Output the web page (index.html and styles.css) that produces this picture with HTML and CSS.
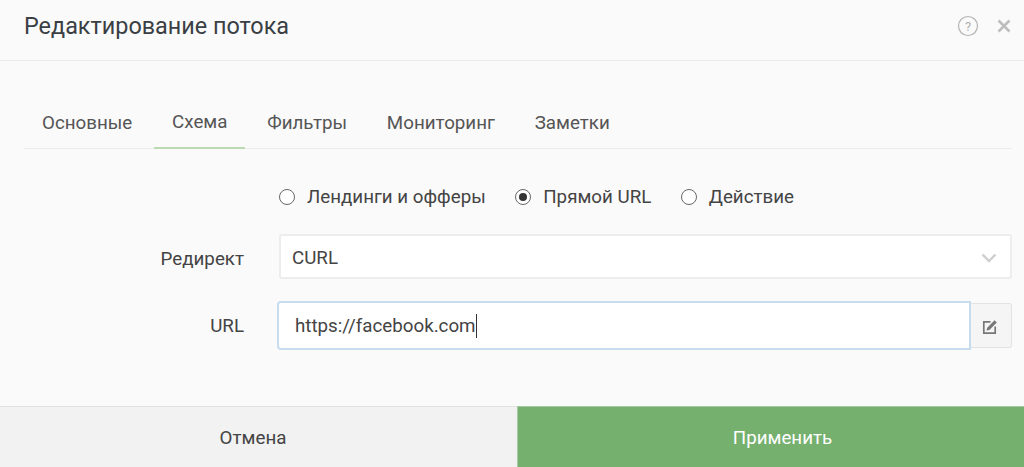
FILE: index.html
```html
<!DOCTYPE html>
<html lang="ru">
<head>
<meta charset="utf-8">
<title>Редактирование потока</title>
<link rel="stylesheet" href="styles.css">
</head>
<body>
<div class="dialog">
  <header class="header">
    <h1 class="title">Редактирование потока</h1>
    <div class="header-icons">
      <svg class="help" width="22" height="22" viewBox="0 0 22 22"><circle cx="11" cy="11" r="9.5" fill="none" stroke="#b4b4b4" stroke-width="1.2"/><text x="11" y="15.5" text-anchor="middle" class="help-mark">?</text></svg>
      <svg class="close" width="16" height="16" viewBox="0 0 16 16"><path d="M2.5 2.5 13.5 13.5M13.5 2.5 2.5 13.5" stroke="#bdbdbd" stroke-width="2.6" fill="none"/></svg>
    </div>
  </header>
  <main class="body">
    <nav class="tabs">
      <a class="tab">Основные</a>
      <a class="tab active">Схема</a>
      <a class="tab">Фильтры</a>
      <a class="tab">Мониторинг</a>
      <a class="tab">Заметки</a>
    </nav>
    <div class="row radios-row">
      <div class="label"></div>
      <div class="radios">
        <label class="radio"><span class="dot"></span>Лендинги и офферы</label>
        <label class="radio"><span class="dot on"></span>Прямой URL</label>
        <label class="radio"><span class="dot"></span>Действие</label>
      </div>
    </div>
    <div class="row select-row">
      <div class="label">Редирект</div>
      <div class="select">
        <span>CURL</span>
        <svg width="16" height="10" viewBox="0 0 16 10"><path d="M1.5 1.5 8 8l6.5-6.5" fill="none" stroke="#cfcfcf" stroke-width="2.4"/></svg>
      </div>
    </div>
    <div class="row url-row">
      <div class="label">URL</div>
      <div class="input-group">
        <div class="input">https://facebook.com<span class="caret"></span></div>
        <div class="addon">
          <svg width="16" height="16" viewBox="0 0 16 16"><path d="M8.5 2.8H1.8v11.4h11.4V7.5" fill="none" stroke="#777" stroke-width="1.7"/><path d="M5.2 8.8 12.6 1.2l2.2 2.2-7.4 7.5-2.9.7z" fill="#777"/></svg>
        </div>
      </div>
    </div>
  </main>
  <footer class="footer">
    <button class="btn cancel">Отмена</button>
    <button class="btn apply">Применить</button>
  </footer>
</div>
</body>
</html>
```
FILE: styles.css
```css
* { box-sizing: border-box; }
html, body { margin: 0; padding: 0; height: 100%; }
body { font-family: Roboto, "Liberation Sans", sans-serif; color: #444; background: #fafafa; overflow: hidden; }
.dialog { width: 1024px; height: 467px; display: flex; flex-direction: column; background: #fafafa; }
.header { height: 61px; flex: none; display: flex; align-items: center; justify-content: space-between; padding: 0 12px 9px 24px; border-bottom: 1px solid #ebebeb; }
.title { margin: 0; font-size: 23.4px; font-weight: 400; color: #3a3f44; line-height: 52px; }
.header-icons { display: flex; align-items: center; gap: 17px; }
.help-mark { font-family: Roboto, sans-serif; font-size: 13px; fill: #b0b0b0; }
.body { flex: 1; padding: 0 12px 0 24px; }
.tabs { display: flex; height: 88px; padding-top: 35px; border-bottom: 1px solid #ececec; }
.tab { display: flex; align-items: center; height: 53px; padding: 0 18px; margin-right: 3.8px; font-size: 18.75px; color: #555; }
.tab.active { border-bottom: 2px solid #b9dab3; }
.row { display: flex; align-items: center; }
.label { width: 220px; flex: none; font-size: 18.75px; color: #444; text-align: right; }
.radios-row { height: 44px; margin-top: 26px; }
.radios { margin-left: 35px; display: flex; gap: 29.5px; }
.radio { display: flex; align-items: center; font-size: 18.75px; color: #444; }
.dot { width: 16px; height: 16px; border: 1px solid #666; border-radius: 50%; background: #fff; margin-right: 12px; display: flex; align-items: center; justify-content: center; }
.dot.on::after { content: ""; width: 8px; height: 8px; border-radius: 50%; background: #333; }
.select-row { margin-top: 15px; }
.select-row .label { padding-top: 4px; }
.select { margin-left: 35px; width: 733px; height: 45px; border: 2px solid #ededed; border-radius: 3px; background: #fff; display: flex; align-items: center; justify-content: space-between; padding: 2px 13px 0 11px; font-size: 18.75px; color: #444; }
.url-row { margin-top: 24px; }
.input-group { margin-left: 35px; width: 733px; display: flex; height: 45px; }
.input { width: 690px; flex: none; height: 45px; border-radius: 2px 0 0 2px; background: #fff; box-shadow: 0 0 0 2px #c8dcef; padding: 0 16px; display: flex; align-items: center; font-size: 18.75px; color: #444; position: relative; z-index: 1; }
.caret { width: 1px; height: 24px; background: #333; }
.addon { width: 43px; height: 45px; border: 1px solid #e3e3e3; border-left: none; border-radius: 0 3px 3px 0; background: #f5f5f5; display: flex; align-items: center; justify-content: center; padding: 2px 1px 0 0; }
.footer { height: 61px; flex: none; display: flex; }
.btn { border: none; font-family: inherit; font-size: 18.75px; cursor: pointer; padding-top: 2px; }
.cancel { width: 517px; background: #f2f2f2; color: #444; border-top: 1px solid #e0e0e0; padding-right: 17px; }
.apply { flex: 1; background: #75b06f; color: #fff; border-left: 1px solid #a9c7a5; border-top: 1px solid #a4c8a0; padding-left: 29px; }
```
